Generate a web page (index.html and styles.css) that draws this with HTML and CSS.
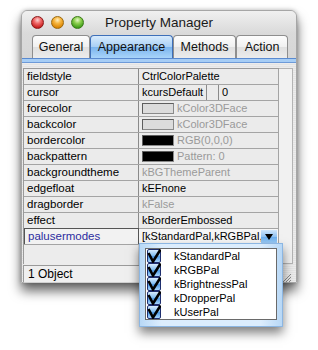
FILE: index.html
```html
<!DOCTYPE html>
<html>
<head>
    <link rel="stylesheet" href="styles.css">
</head>
<body>
    <div class="window">
        <div class="titlebar">
            <div class="lights">
                <span class="light red"></span>
                <span class="light yellow"></span>
                <span class="light green"></span>
            </div>
            <div class="title">Property Manager</div>
        </div>

        <div class="tabbar">
            <div class="tab tab-general">General</div>
            <div class="tab tab-appearance selected">Appearance</div>
            <div class="tab tab-methods">Methods</div>
            <div class="tab tab-action">Action</div>
        </div>
        <div class="tab-rule"></div>

        <div class="props">
            <div class="table">
                <div class="row"><div class="name">fieldstyle</div><div class="val">CtrlColorPalette</div></div>
                <div class="row">
                    <div class="name">cursor</div>
                    <div class="val split">
                        <span class="cell-a">kcursDefault</span>
                        <span class="cell-gap"></span>
                        <span class="cell-b">0</span>
                    </div>
                </div>
                <div class="row"><div class="name">forecolor</div><div class="val dim"><span class="swatch light-swatch"></span>kColor3DFace</div></div>
                <div class="row"><div class="name">backcolor</div><div class="val dim"><span class="swatch light-swatch"></span>kColor3DFace</div></div>
                <div class="row"><div class="name">bordercolor</div><div class="val dim"><span class="swatch dark-swatch"></span>RGB(0,0,0)</div></div>
                <div class="row"><div class="name">backpattern</div><div class="val dim"><span class="swatch dark-swatch"></span>Pattern: 0</div></div>
                <div class="row"><div class="name">backgroundtheme</div><div class="val dim">kBGThemeParent</div></div>
                <div class="row"><div class="name">edgefloat</div><div class="val">kEFnone</div></div>
                <div class="row"><div class="name">dragborder</div><div class="val dim">kFalse</div></div>
                <div class="row"><div class="name">effect</div><div class="val">kBorderEmbossed</div></div>
                <div class="row active">
                    <div class="name">palusermodes</div>
                    <div class="val">
                        <span class="val-text">[kStandardPal,kRGBPal,kE</span>
                        <span class="drop-btn"></span>
                    </div>
                </div>
                <div class="row empty"><div class="name"></div><div class="val"></div></div>
            </div>
            <div class="strip"></div>
        </div>

        <div class="statusbar">
            <div class="status">1 Object</div>
            <svg class="grip" width="10" height="10" viewBox="0 0 10 10">
                <path d="M2 10 L10 2 M5 10 L10 5 M8 10 L10 8" stroke="#8a8a8a" stroke-width="1"/>
            </svg>
        </div>

        <!-- the open popup for palusermodes -->
        <div class="popup">
            <div class="list">
                <div class="item"><span class="check"><svg width="14" height="14" viewBox="0 0 14 14"><path d="M1.5 4 L6 12.5 L13.5 0.5" fill="none" stroke="#000" stroke-width="2.6"/></svg></span>kStandardPal</div>
                <div class="item"><span class="check"><svg width="14" height="14" viewBox="0 0 14 14"><path d="M1.5 4 L6 12.5 L13.5 0.5" fill="none" stroke="#000" stroke-width="2.6"/></svg></span>kRGBPal</div>
                <div class="item"><span class="check"><svg width="14" height="14" viewBox="0 0 14 14"><path d="M1.5 4 L6 12.5 L13.5 0.5" fill="none" stroke="#000" stroke-width="2.6"/></svg></span>kBrightnessPal</div>
                <div class="item"><span class="check"><svg width="14" height="14" viewBox="0 0 14 14"><path d="M1.5 4 L6 12.5 L13.5 0.5" fill="none" stroke="#000" stroke-width="2.6"/></svg></span>kDropperPal</div>
                <div class="item"><span class="check"><svg width="14" height="14" viewBox="0 0 14 14"><path d="M1.5 4 L6 12.5 L13.5 0.5" fill="none" stroke="#000" stroke-width="2.6"/></svg></span>kUserPal</div>
            </div>
        </div>
    </div>
</body>
</html>
```

FILE: styles.css
```css
html {
    min-height: 350px;
    background: white;
}
body {
    margin: 0;
    min-height: 350px;
    padding-top: 10px;
    box-sizing: border-box;
    background: white;
    font-family: "Liberation Sans", Arial, sans-serif;
    color: black;
}

.window {
    position: relative;
    margin: 0 0 0 21px;
    width: 274px;
    height: 271px;
    border: 1px solid #a6a6a6;
    border-radius: 6px 6px 0 0;
    background: repeating-linear-gradient(#ececec 0px, #ececec 1px, #e4e4e4 1px, #e4e4e4 2px);
    box-shadow: 0 8px 12px rgba(0, 0, 0, 0.6), 0 0 4px rgba(0, 0, 0, 0.25);
}

.titlebar {
    position: relative;
    height: 22px;
    display: flex;
    align-items: center;
    border-radius: 6px 6px 0 0;
    background: linear-gradient(#f0f0f0, #dadada);
}
.lights {
    display: flex;
    gap: 7px;
    padding-left: 9px;
}
.light {
    width: 13px;
    height: 13px;
    border-radius: 50%;
    box-sizing: border-box;
}
.red {
    background: radial-gradient(circle at 50% 28%, #fbd2d2 0, #f06a6a 35%, #c41a1a 80%);
    border: 1px solid #8a1a1a;
}
.yellow {
    background: radial-gradient(circle at 50% 28%, #fff0c0 0, #f7b640 35%, #d98200 80%);
    border: 1px solid #9a6a10;
}
.green {
    background: radial-gradient(circle at 50% 28%, #e4f8c8 0, #8ed050 35%, #3a9a16 80%);
    border: 1px solid #3a7a18;
}
.title {
    position: absolute;
    left: 0;
    right: 0;
    text-align: center;
    font-size: 13.5px;
    color: #1a1a1a;
    pointer-events: none;
}

.tabbar {
    display: flex;
    height: 25px;
    padding-left: 10px;
    align-items: flex-end;
    background: linear-gradient(#dadada, #d6d6d6);
}
.tab {
    height: 23px;
    box-sizing: border-box;
    display: flex;
    align-items: center;
    justify-content: center;
    font-size: 12.5px;
    color: #111;
    border: 1px solid #8e8e8e;
    border-bottom: none;
    border-radius: 4px 4px 0 0;
    background: linear-gradient(#fdfdfd, #f0f0f0 50%, #e0e0e0 52%, #ececec);
}
.tab-general { width: 58px; }
.tab-appearance { width: 83px; }
.tab-methods { width: 63px; }
.tab-action { width: 52px; }
.tab.selected {
    border-color: #3e6fb8;
    background: linear-gradient(#d8ebfc, #a9d0f6 48%, #7cb5ee 52%, #a8d4fa);
}
.tab-rule {
    height: 3px;
    border-top: 1px solid #5a8ad0;
    border-bottom: 1px solid #6d9ad8;
    background: #a6cdf5;
}

.props {
    display: flex;
    margin: 5px 3px 0 1px;
    height: 196px;
}
.table {
    width: 256px;
    border-top: 1px solid #9a9a9a;
    border-left: 1px solid #9a9a9a;
    box-sizing: border-box;
}
.row {
    display: flex;
    height: 16px;
    box-sizing: border-box;
    border-bottom: 1px solid #a4a4a4;
    font-size: 11px;
    line-height: 15px;
    background: #ebebeb;
}
.name {
    width: 115px;
    padding-left: 3px;
    box-sizing: border-box;
    border-right: 1px solid #8a8a8a;
    white-space: nowrap;
    font-size: 11.5px;
}
.val {
    flex: 1;
    display: flex;
    align-items: center;
    padding-left: 3px;
    white-space: nowrap;
    overflow: hidden;
    border-right: 1px solid #a4a4a4;
}
.dim {
    color: #9a9a9a;
}
.split {
    padding-left: 0;
}
.cell-a {
    width: 64px;
    padding-left: 3px;
    border-right: 1px solid #8a8a8a;
    height: 15px;
}
.cell-gap {
    width: 11px;
    height: 15px;
    border-right: 1px solid #8a8a8a;
}
.cell-b {
    padding-left: 3px;
}
.swatch {
    width: 32px;
    height: 11px;
    margin-right: 3px;
    box-sizing: border-box;
    border: 1px solid #8a8a8a;
    border-top-color: #5e5e5e;
    border-left-color: #5e5e5e;
}
.light-swatch {
    background: #dcdcdc;
}
.dark-swatch {
    background: #000;
}
.row.active .name {
    background: #f2f2f2;
    color: #2c2ca0;
    border: 1px solid #555;
    border-bottom: none;
    margin-top: -1px;
    height: 16px;
}
.row.active .val {
    background: #f6f6f6;
    padding-right: 1px;
}
.val-text {
    flex: 1;
    overflow: hidden;
}
.drop-btn {
    position: relative;
    width: 16px;
    height: 14px;
    flex: none;
    background: linear-gradient(#cfe6fc, #8ec2f4 50%, #6aaeee 52%, #a6d2fa);
}
.drop-btn::after {
    content: "";
    position: absolute;
    left: 4px;
    top: 4px;
    border-left: 4px solid transparent;
    border-right: 4px solid transparent;
    border-top: 6px solid #000;
}
.row.empty {
    height: 20px;
    border-bottom: none;
    background: #ececec;
}
.row.empty .name,
.row.empty .val {
    border-right-color: #cfcfcf;
}
.strip {
    width: 14px;
    border: 1px solid #b4b4b4;
    border-left: none;
    background: #f1f1f1;
}

.statusbar {
    display: flex;
    align-items: flex-end;
    margin: 0 3px 0 1px;
    height: 19px;
}
.status {
    flex: 1;
    height: 18px;
    box-sizing: border-box;
    border: 1px solid #9a9a9a;
    border-right-color: #d0d0d0;
    border-bottom-color: #d0d0d0;
    font-size: 12px;
    line-height: 16px;
    padding-left: 4px;
    background: #efefef;
}
.grip {
    margin: 0 2px 1px 2px;
}

.popup {
    position: absolute;
    left: 117px;
    top: 232px;
    width: 144px;
    height: 84px;
    box-sizing: border-box;
    padding: 4px 5px 6px 5px;
    border: 1px solid #8cb6e2;
    background: linear-gradient(90deg, #b8d8f6, #dcedfd 15%, #dcedfd 85%, #b8d8f6);
    box-shadow: 0 6px 10px rgba(0, 0, 0, 0.5);
}
.list {
    height: 100%;
    box-sizing: border-box;
    background: white;
    border: 1px solid #6a6a6a;
    padding: 0 1px;
}
.item {
    display: flex;
    align-items: center;
    height: 14px;
    font-size: 11px;
}
.check {
    display: block;
    width: 14px;
    height: 14px;
    margin-right: 13px;
    box-sizing: border-box;
    border: 1px solid #1e2e6e;
    border-radius: 2px;
    background: linear-gradient(#d8ecfe, #86c0f2 45%, #4f9ae6 55%, #a8d6fc);
    overflow: visible;
}
.check svg {
    display: block;
    margin: -1px 0 0 -1px;
}
```
